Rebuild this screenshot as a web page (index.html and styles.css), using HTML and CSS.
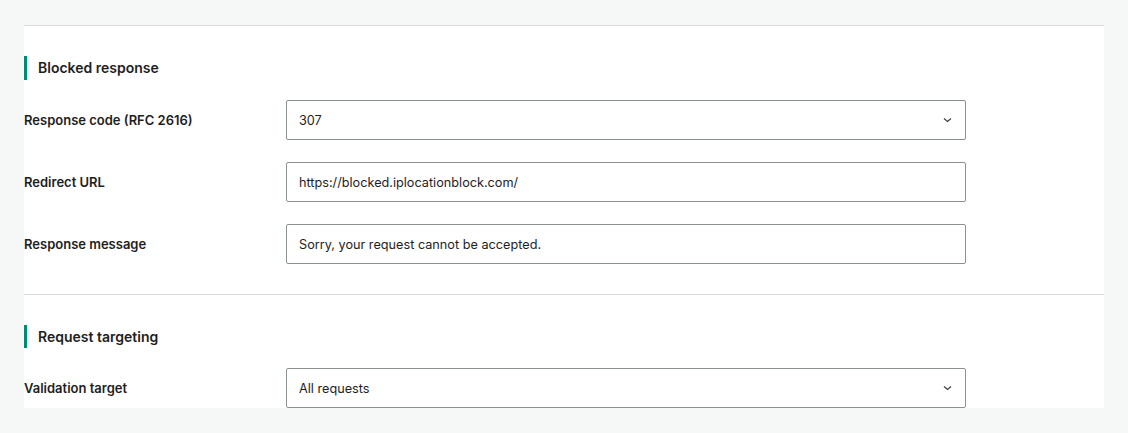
FILE: index.html
```html
<!DOCTYPE html>
<html>
<head>
<meta charset="utf-8">
<link rel="stylesheet" href="styles.css">
</head>
<body>
<div class="panel">
  <section class="section first">
    <h2 class="heading">Blocked response</h2>
    <div class="rows">
      <div class="row">
        <label class="label">Response code (RFC 2616)</label>
        <div class="field select">
          <span>307</span>
          <svg class="chev" width="9" height="6" viewBox="0 0 9 6"><path d="M1 1.5 L4.5 4.5 L8 1.5" fill="none" stroke="#3c434a" stroke-width="1.3"/></svg>
        </div>
      </div>
      <div class="row">
        <label class="label">Redirect URL</label>
        <div class="field"><span>https://blocked.iplocationblock.com/</span></div>
      </div>
      <div class="row">
        <label class="label">Response message</label>
        <div class="field"><span>Sorry, your request cannot be accepted.</span></div>
      </div>
    </div>
  </section>
  <section class="section second">
    <h2 class="heading">Request targeting</h2>
    <div class="rows">
      <div class="row">
        <label class="label">Validation target</label>
        <div class="field select">
          <span>All requests</span>
          <svg class="chev" width="9" height="6" viewBox="0 0 9 6"><path d="M1 1.5 L4.5 4.5 L8 1.5" fill="none" stroke="#3c434a" stroke-width="1.3"/></svg>
        </div>
      </div>
    </div>
  </section>
</div>
</body>
</html>
```
FILE: styles.css
```css
html, body {
  margin: 0;
  padding: 0;
}
body {
  background: #f6f7f7;
  font-family: Inter, "Noto Sans", sans-serif;
  color: #1e1e1e;
  padding: 25px 24px 0 24px;
  height: 433px;
  box-sizing: border-box;
  overflow: hidden;
}
.panel {
  background: #fff;
  border-top: 1px solid #dcdcde;
  height: 382px;
  overflow: hidden;
}
.section {
  padding-top: 30px;
}
.section.first {
  padding-bottom: 30px;
  border-bottom: 1px solid #dcdcde;
}
.heading {
  margin: 0 0 20px 0;
  border-left: 3px solid #008a70;
  padding-left: 11px;
  height: 24px;
  line-height: 24px;
  font-size: 14px;
  font-weight: 600;
  color: #1e1e1e;
}
.section.second .heading {
  height: 23px;
  line-height: 23px;
}
.rows {
  display: flex;
  flex-direction: column;
  gap: 22px;
}
.row {
  display: grid;
  grid-template-columns: 262px 680px;
  align-items: center;
}
.label {
  font-size: 13px;
  font-weight: 600;
  color: #1e1e1e;
}
.field {
  height: 40px;
  box-sizing: border-box;
  border: 1px solid #8c8f94;
  border-radius: 2px;
  padding: 0 12px;
  display: flex;
  align-items: center;
  justify-content: space-between;
  font-size: 12.7px;
  color: #1e1e1e;
}
.chev {
  margin-right: 1px;
}
```
